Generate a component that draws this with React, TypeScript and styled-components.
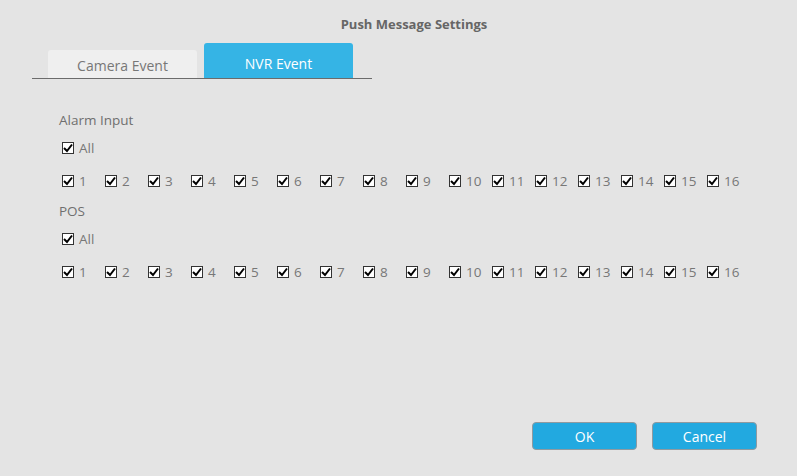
import React from "react";
import styled, { createGlobalStyle } from "styled-components";

const Global = createGlobalStyle`
  html, body { margin: 0; padding: 0; background: #e4e4e4; }
  body { font-family: "Open Sans", "Noto Sans", sans-serif; }
`;

const Page = styled.div`
  width: 797px;
  height: 476px;
  background: #e4e4e4;
  display: flex;
  flex-direction: column;
  position: relative;
  box-sizing: border-box;
`;

const Title = styled.div`
  height: 43px;
  padding-top: 14px;
  box-sizing: border-box;
  text-align: center;
  padding-left: 31px;
  font-size: 13px;
  font-weight: 700;
  color: #666;
  line-height: 20px;
`;

const TabBar = styled.div`
  margin-left: 32px;
  width: 340px;
  height: 36px;
  border-bottom: 1px solid #6b6b6b;
  display: flex;
  align-items: flex-end;
  gap: 7px;
  padding-left: 16px;
  box-sizing: border-box;
`;

const Tab = styled.div<{ $active?: boolean }>`
  width: 149px;
  height: ${(p) => (p.$active ? 35 : 28)}px;
  border-radius: 3px 3px 0 0;
  background: ${(p) => (p.$active ? "#35b4e5" : "#efefef")};
  color: ${(p) => (p.$active ? "#fff" : "#777")};
  font-size: 14px;
  display: flex;
  align-items: center;
  justify-content: center;
  padding-top: ${(p) => (p.$active ? 5 : 2)}px;
  box-sizing: border-box;
`;

const Content = styled.div`
  padding: 31px 0 0 59px;
  display: flex;
  flex-direction: column;
`;

const Section = styled.div`
  display: flex;
  flex-direction: column;
  margin-bottom: 12px;
`;

const Label = styled.div`
  font-size: 13.5px;
  color: #6f6f6f;
  line-height: 20px;
  height: 20px;
`;

const AllRow = styled.div`
  margin-top: 10px;
  margin-left: 3px;
  height: 16px;
  display: flex;
`;

const NumRow = styled.div`
  margin-top: 17px;
  margin-left: 3px;
  display: flex;
  height: 16px;
`;

const Item = styled.label<{ $w?: number }>`
  display: flex;
  align-items: center;
  width: ${(p) => (p.$w ? `${p.$w}px` : "auto")};
  font-size: 13.5px;
  color: #777;
  line-height: 16px;
  gap: 5px;
`;

const Box = styled.span`
  width: 12px;
  height: 12px;
  box-sizing: border-box;
  border: 1px solid #333;
  background: #fff;
  display: flex;
  align-items: center;
  justify-content: center;
  flex-shrink: 0;
`;

const Footer = styled.div`
  position: absolute;
  right: 40px;
  bottom: 26px;
  display: flex;
  gap: 15px;
`;

const Button = styled.button`
  width: 105px;
  height: 28px;
  border: 1px solid #8f9aa0;
  border-radius: 4px;
  background: #22a9e0;
  color: #fff;
  font-family: "Open Sans", "Noto Sans", sans-serif;
  font-size: 14px;
  padding: 0;
  cursor: pointer;
`;

const Check = () => (
  <Box>
    <svg width="10" height="10" viewBox="0 0 10 10">
      <path d="M1 5 L4 8 L9 1.5" fill="none" stroke="#000" strokeWidth="2" />
    </svg>
  </Box>
);

const nums = Array.from({ length: 16 }, (_, i) => i + 1);

const Group = ({ label }: { label: string }) => (
  <Section>
    <Label>{label}</Label>
    <AllRow>
      <Item>
        <Check />
        All
      </Item>
    </AllRow>
    <NumRow>
      {nums.map((n) => (
        <Item key={n} $w={43}>
          <Check />
          {n}
        </Item>
      ))}
    </NumRow>
  </Section>
);

export default function App() {
  return (
    <Page>
      <Global />
      <Title>Push Message Settings</Title>
      <TabBar>
        <Tab>Camera Event</Tab>
        <Tab $active>NVR Event</Tab>
      </TabBar>
      <Content>
        <Group label="Alarm Input" />
        <Group label="POS" />
      </Content>
      <Footer>
        <Button>OK</Button>
        <Button>Cancel</Button>
      </Footer>
    </Page>
  );
}
